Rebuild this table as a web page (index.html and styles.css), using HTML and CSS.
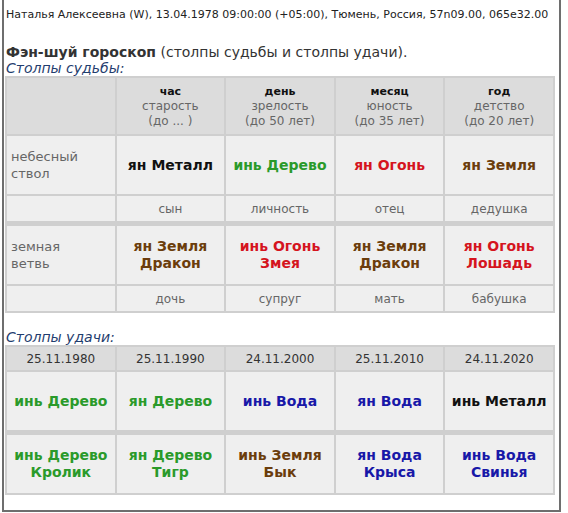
FILE: index.html
```html
<!DOCTYPE html>
<html lang="ru">
<head>
<meta charset="utf-8">
<link rel="stylesheet" href="styles.css">
</head>
<body>
<div class="frame">
  <p class="person">Наталья Алексеевна (W), 13.04.1978 09:00:00 (+05:00), Тюмень, Россия, 57n09.00, 065e32.00</p>
  <h1 class="title"><b>Фэн-шуй гороскоп</b> (столпы судьбы и столпы удачи).</h1>
  <h2 class="caption">Столпы судьбы:</h2>
  <table class="grid fate">
    <tr class="head">
      <td></td>
      <td><b>час</b><br>старость<br>(до ... )</td>
      <td><b>день</b><br>зрелость<br>(до 50 лет)</td>
      <td><b>месяц</b><br>юность<br>(до 35 лет)</td>
      <td><b>год</b><br>детство<br>(до 20 лет)</td>
    </tr>
    <tr class="main">
      <td class="label">небесный<br>ствол</td>
      <td class="metal">ян Металл</td>
      <td class="wood">инь Дерево</td>
      <td class="fire">ян Огонь</td>
      <td class="earth">ян Земля</td>
    </tr>
    <tr class="rel">
      <td></td><td>сын</td><td>личность</td><td>отец</td><td>дедушка</td>
    </tr>
    <tr class="main sep">
      <td class="label">земная<br>ветвь</td>
      <td class="earth">ян Земля<br>Дракон</td>
      <td class="fire">инь Огонь<br>Змея</td>
      <td class="earth">ян Земля<br>Дракон</td>
      <td class="fire">ян Огонь<br>Лошадь</td>
    </tr>
    <tr class="rel">
      <td></td><td>дочь</td><td>супруг</td><td>мать</td><td>бабушка</td>
    </tr>
  </table>
  <h2 class="caption luck-cap">Столпы удачи:</h2>
  <table class="grid luck">
    <tr class="dates">
      <td>25.11.1980</td><td>25.11.1990</td><td>24.11.2000</td><td>25.11.2010</td><td>24.11.2020</td>
    </tr>
    <tr class="main">
      <td class="wood">инь Дерево</td>
      <td class="wood">ян Дерево</td>
      <td class="water">инь Вода</td>
      <td class="water">ян Вода</td>
      <td class="metal">инь Металл</td>
    </tr>
    <tr class="main sep">
      <td class="wood">инь Дерево<br>Кролик</td>
      <td class="wood">ян Дерево<br>Тигр</td>
      <td class="earth">инь Земля<br>Бык</td>
      <td class="water">ян Вода<br>Крыса</td>
      <td class="water">инь Вода<br>Свинья</td>
    </tr>
  </table>
</div>
</body>
</html>
```

FILE: styles.css
```css
html, body {
  margin: 0;
  padding: 0;
  background: #fff;
}
body {
  font-family: "DejaVu Sans", Verdana, sans-serif;
  color: #333;
}
.frame {
  width: 559px;
  height: 512px;
  margin-left: 2px;
  border: 2px solid #6e6e6e;
  border-top: none;
  box-sizing: border-box;
  padding: 7px 0 0 1px;
}
.person {
  margin: 0 0 0 1px;
  font-size: 11px;
  line-height: 16px;
  color: #222;
}
.title {
  margin: 20px 0 0 1px;
  font-size: 14px;
  font-weight: normal;
  line-height: 18px;
  color: #333;
}
.caption {
  margin: 0 0 0 1px;
  font-size: 14px;
  font-weight: normal;
  font-style: italic;
  line-height: 15px;
  color: #1f3d6e;
}
.luck-cap {
  margin-top: 17px;
}
.grid {
  width: 550px;
  table-layout: fixed;
  border-collapse: separate;
  border-spacing: 2px;
  background: #cfcfcf;
  font-size: 12px;
}
.grid td {
  background: #efefef;
  text-align: center;
  vertical-align: middle;
  padding: 0;
  color: #666;
}
.fate .head td {
  background: #dcdcdc;
  height: 56px;
  line-height: 15px;
}
.fate .head b {
  color: #111;
  font-size: 11px;
}
.grid .main td {
  height: 58px;
  font-weight: bold;
  font-size: 14px;
  line-height: 17px;
}
.grid .sep td {
  border-top: 3px solid #cfcfcf;
}
.grid .rel td {
  height: 25px;
}
.grid .label {
  text-align: left;
  padding-left: 4px;
  font-weight: normal !important;
  color: #666;
  font-size: 13px !important;
}
.luck .dates td {
  background: #dcdcdc;
  height: 23px;
  color: #333;
}
.metal { color: #111 !important; }
.wood { color: #2a9a2a !important; }
.fire { color: #d5141e !important; }
.earth { color: #6b3d0c !important; }
.water { color: #1818a8 !important; }
```
